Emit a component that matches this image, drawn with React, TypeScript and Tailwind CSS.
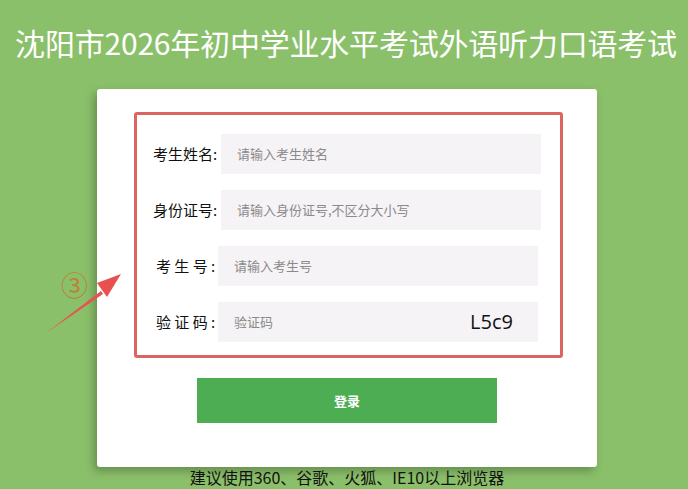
import React from 'react';

const fields = [
  { label: '考生姓名:', placeholder: '请输入考生姓名', spaced: false },
  { label: '身份证号:', placeholder: '请输入身份证号,不区分大小写', spaced: false },
  { label: '考 生 号 :', placeholder: '请输入考生号', spaced: true },
  { label: '验 证 码 :', placeholder: '验证码', spaced: true, captcha: 'L5c9' },
];

const App: React.FC = () => {
  return (
    <div
      className="relative h-[489px] w-full overflow-hidden bg-[#8bc06a]"
      style={{ fontFamily: '"Noto Sans CJK SC", "Noto Sans", sans-serif' }}
    >
      {/* Title */}
      <div className="flex h-[89px] items-center justify-center pb-[6px] pl-[4px]">
        <h1 className="whitespace-nowrap text-[30px] font-normal leading-none tracking-[-0.2px] text-white">
          沈阳市2026年初中学业水平考试外语听力口语考试
        </h1>
      </div>

      {/* Card */}
      <div className="ml-[97px] h-[378px] w-[500px] rounded-[3px] bg-white pt-[23px] shadow-[-3px_4px_10px_rgba(0,0,0,0.28)]">
        <div className="ml-[37px] w-[429px] rounded-[3px] border-[3px] border-[#dc6461] px-[16px] pt-[19px] pb-[13px]">
          <div className="flex flex-col gap-[16px]">
            {fields.map((f, i) => (
              <div key={i} className="flex h-[40px] items-center">
                <span
                  className={
                    f.spaced
                      ? 'w-[65px] whitespace-nowrap pl-[3px] text-[15px] text-[#111]'
                      : 'w-[68px] whitespace-nowrap text-[15px] text-[#111]'
                  }
                >
                  {f.label}
                </span>
                <div
                  className={
                    'flex h-[40px] w-[320px] items-center bg-[#f6f3f6] ' +
                    (f.spaced ? 'pl-[16px] pr-[25px]' : 'pl-[16px] pr-[16px]')
                  }
                >
                  <input
                    type="text"
                    placeholder={f.placeholder}
                    className="min-w-0 flex-1 bg-transparent text-[13px] text-[#333] outline-none placeholder:text-[#8a8a8a]"
                  />
                  {f.captcha && (
                    <span
                      className="text-[20px] leading-none text-[#111]"
                      style={{ fontFamily: '"Open Sans", "Liberation Sans", sans-serif' }}
                    >
                      {f.captcha}
                    </span>
                  )}
                </div>
              </div>
            ))}
          </div>
        </div>

        <button className="mt-[20px] ml-[100px] flex h-[45px] w-[300px] items-center justify-center bg-[#4cad53] text-[13px] font-bold text-white">
          登录
        </button>
      </div>

      {/* Browser hint */}
      <p className="ml-[97px] w-[500px] text-center text-[16px] leading-[21px] text-[#111]">
        建议使用360、谷歌、火狐、IE10以上浏览器
      </p>

      {/* Annotation: circled number and arrow */}
      <span className="absolute left-[61px] top-[271px] text-[27px] leading-none text-[#b98238]">
        ③
      </span>
      <svg
        className="absolute left-0 top-0"
        width="688"
        height="489"
        viewBox="0 0 688 489"
        fill="none"
      >
        <path d="M46 333 L101 291 L103 294 Z" fill="#e8514f" />
        <path d="M121 274 L97 283 L107 297 Z" fill="#e8514f" />
      </svg>
    </div>
  );
};

export default App;
